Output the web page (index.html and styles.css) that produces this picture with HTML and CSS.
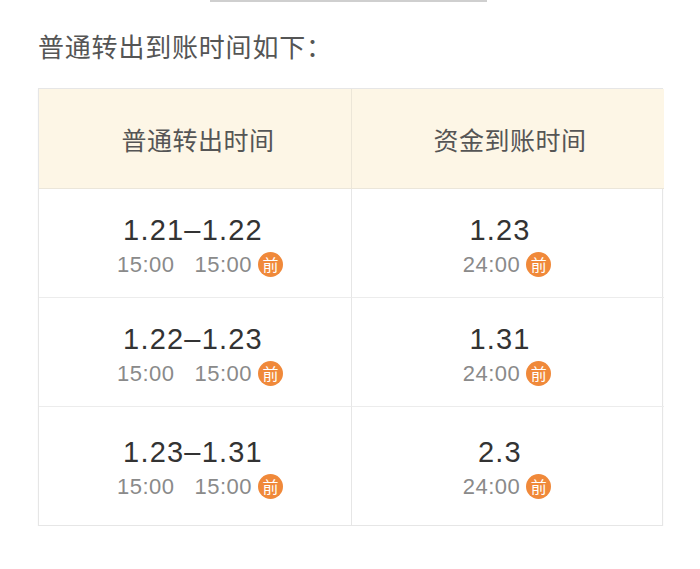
FILE: index.html
```html
<!DOCTYPE html>
<html lang="zh-CN">
<head>
<meta charset="utf-8">
<link rel="stylesheet" href="styles.css">
</head>
<body>
<div class="topbar"></div>
<p class="title">普通转出到账时间如下：</p>
<div class="table">
  <div class="th">普通转出时间</div>
  <div class="th th-right">资金到账时间</div>

  <div class="td">
    <div class="main">1.21–1.22</div>
    <div class="sub"><span>15:00</span><span>15:00</span><span class="badge">前</span></div>
  </div>
  <div class="td td-right">
    <div class="main">1.23</div>
    <div class="sub"><span>24:00</span><span class="badge">前</span></div>
  </div>

  <div class="td">
    <div class="main">1.22–1.23</div>
    <div class="sub"><span>15:00</span><span>15:00</span><span class="badge">前</span></div>
  </div>
  <div class="td td-right">
    <div class="main">1.31</div>
    <div class="sub"><span>24:00</span><span class="badge">前</span></div>
  </div>

  <div class="td td-last">
    <div class="main">1.23–1.31</div>
    <div class="sub"><span>15:00</span><span>15:00</span><span class="badge">前</span></div>
  </div>
  <div class="td td-right td-last">
    <div class="main">2.3</div>
    <div class="sub"><span>24:00</span><span class="badge">前</span></div>
  </div>
</div>
</body>
</html>
```
FILE: styles.css
```css
html, body {
  margin: 0;
  padding: 0;
  background: #ffffff;
}
body {
  font-family: "Liberation Sans", "Noto Sans CJK SC", sans-serif;
  color: #333;
}
.topbar {
  margin-left: 210px;
  width: 277px;
  height: 2px;
  background: #cfcfcf;
}
.title {
  margin: 27px 0 0 38px;
  height: 43px;
  line-height: 34px;
  font-family: "Noto Sans CJK SC", sans-serif;
  font-size: 26px;
  letter-spacing: 0.8px;
  color: #555;
}
.table {
  margin: 16px 0 0 38px;
  width: 625px;
  display: grid;
  grid-template-columns: 312px 313px;
  grid-template-rows: 100px 109px 109px 118px;
  border: 1px solid #e6e6e6;
  box-sizing: border-box;
  box-shadow: 0 1px 2px rgba(0,0,0,0.04);
}
.th {
  background: #fdf6e6;
  display: flex;
  align-items: center;
  justify-content: center;
  font-family: "Noto Sans CJK SC", sans-serif;
  font-size: 25px;
  letter-spacing: 0.5px;
  color: #555;
  border-bottom: 1px solid #ebe6da;
  padding-left: 6px;
}
.th-right {
  border-left: 1px solid #ece6d8;
  padding-left: 4px;
}
.td {
  display: flex;
  flex-direction: column;
  align-items: center;
  justify-content: center;
  border-bottom: 1px solid #ececec;
  padding-top: 6px;
}
.td-right {
  border-left: 1px solid #e6e6e6;
  padding-right: 12px;
}
.td-last {
  border-bottom: none;
  padding-top: 4px;
}
.main {
  font-size: 29px;
  letter-spacing: 1.2px;
  line-height: 34px;
  color: #333;
  margin-right: 4px;
}
.sub {
  display: flex;
  align-items: center;
  font-size: 22px;
  letter-spacing: 0.5px;
  line-height: 30px;
  color: #8a8a8a;
  margin-left: 10px;
  margin-top: 3px;
}
.sub span + span {
  margin-left: 20px;
}
.sub .badge {
  margin-left: 6px;
  width: 25px;
  height: 25px;
  border-radius: 50%;
  background: #f0893a;
  color: #fff;
  font-family: "Noto Sans CJK SC", sans-serif;
  font-size: 16px;
  line-height: 25px;
  text-align: center;
  letter-spacing: 0;
}
```
